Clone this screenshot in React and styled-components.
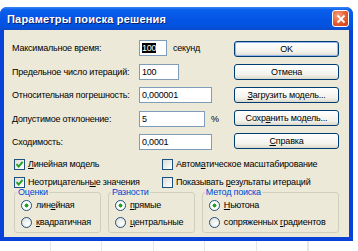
import React from "react";
import styled, { createGlobalStyle } from "styled-components";

const GlobalStyle = createGlobalStyle`
	html, body {
		margin: 0;
		padding: 0;
		background: #ffffff;
	}
	body {
		font-family: "Liberation Sans", Arial, sans-serif;
		font-size: 9px;
		letter-spacing: -0.2px;
		color: #000;
	}
`;

const U = styled.span`
	text-decoration: underline;
`;

const u = (text, i) => (
	<span>
		{text.slice(0, i)}
		<U>{text[i]}</U>
		{text.slice(i + 1)}
	</span>
);

const Check = ({ checked }) => (
	<CheckBox>
		{checked && (
			<svg width="9" height="9" viewBox="0 0 9 9">
				<path d="M1.5 4.2 L3.6 6.5 L7.6 1.8" fill="none" stroke="#21a121" strokeWidth="1.9" />
			</svg>
		)}
	</CheckBox>
);

const App = () => {
	const fields = [
		{ label: "Максимальное время:", value: "100", width: 28, unit: "секунд", selected: true },
		{ label: "Предельное число итераций:", value: "100", width: 40 },
		{ label: "Относительная погрешность:", value: "0,000001", width: 73 },
		{ label: "Допустимое отклонение:", value: "5", width: 66, unit: "%" },
		{ label: "Сходимость:", value: "0,0001", width: 73 },
	];

	const buttons = [
		{ text: "OK", focused: true },
		{ text: "Отмена" },
		{ text: u("Загрузить модель...", 0) },
		{ text: u("Сохранить модель...", 4) },
		{ text: u("Справка", 0) },
	];

	const groups = [
		{ title: "Оценки", width: 88, items: [u("линейная", 3), u("квадратичная", 0)] },
		{ title: "Разности", width: 88, items: [u("прямые", 0), u("центральные", 0)] },
		{ title: "Метод поиска", width: 139, items: [u("Ньютона", 0), u("сопряженных градиентов", 12)] },
	];

	return (
		<>
			<GlobalStyle />
			<Window>
				<TitleBar>
					<Title>Параметры поиска решения</Title>
					<CloseButton>
						<svg width="10" height="10" viewBox="0 0 10 10">
							<path d="M1.5 1.5 L8.5 8.5 M8.5 1.5 L1.5 8.5" stroke="#fff" strokeWidth="1.8" />
						</svg>
					</CloseButton>
				</TitleBar>
				<Body>
					<Top>
						<Form>
							{fields.map((f, i) => (
								<Row key={i}>
									<Label>{f.label}</Label>
									<Input style={{ width: f.width }}>
										{f.selected ? <Selected>{f.value}</Selected> : f.value}
									</Input>
									{f.unit && <Unit>{f.unit}</Unit>}
								</Row>
							))}
						</Form>
						<Buttons>
							{buttons.map((b, i) => (
								<Button key={i} $focused={b.focused}>{b.text}</Button>
							))}
						</Buttons>
					</Top>
					<Checks>
						<CheckRow><Check checked />{u("Линейная модель", 0)}</CheckRow>
						<CheckRow><Check />{u("Автоматическое масштабирование", 5)}</CheckRow>
						<CheckRow><Check checked />{u("Неотрицательные значения", 13)}</CheckRow>
						<CheckRow><Check />{u("Показывать результаты итераций", 11)}</CheckRow>
					</Checks>
					<Groups>
						{groups.map((g, i) => (
							<Group key={i} style={{ width: g.width }}>
								<Legend>{g.title}</Legend>
								{g.items.map((item, k) => (
									<RadioRow key={k}>
										<Radio $on={k === 0} />
										{item}
									</RadioRow>
								))}
							</Group>
						))}
					</Groups>
				</Body>
			</Window>
			<Sheet />
		</>
	);
};

export default App;

const Window = styled.div`
	margin-top: 7px;
	width: 353px;
	box-sizing: border-box;
	background: #0842d8;
	border-radius: 7px 7px 0 0;
	padding: 0 4px 4px 4px;
`;

const TitleBar = styled.div`
	height: 23px;
	display: flex;
	align-items: center;
	justify-content: space-between;
	margin: 0 -4px;
	padding: 0 4px 0 7px;
	border-radius: 7px 7px 0 0;
	background: linear-gradient(#3b8af8 0%, #0a5fec 12%, #0555e6 50%, #0352df 85%, #0c4bc8 100%);
`;

const Title = styled.div`
	color: #fff;
	font-weight: bold;
	font-size: 11px;
	text-shadow: 1px 1px #0a1f6c;
	letter-spacing: 0.2px;
`;

const CloseButton = styled.div`
	width: 15px;
	height: 15px;
	display: flex;
	align-items: center;
	justify-content: center;
	border: 1px solid #fff;
	border-radius: 3px;
	background: radial-gradient(circle at 35% 30%, #f6a07e, #e4562c 60%, #c73c1a);
`;

const Body = styled.div`
	background: #ece9d8;
	padding: 10px 10px 4px 8px;
`;

const Top = styled.div`
	display: flex;
	justify-content: space-between;
`;

const Form = styled.div`
	display: flex;
	flex-direction: column;
	gap: 7.5px;
`;

const Row = styled.div`
	display: flex;
	align-items: center;
	height: 16px;
	white-space: nowrap;
`;

const Label = styled.div`
	width: 127px;
	flex-shrink: 0;
`;

const Input = styled.div`
	height: 16px;
	box-sizing: border-box;
	border: 1px solid #7f9db9;
	background: #fff;
	display: flex;
	align-items: center;
	padding-left: 2px;
`;

const Selected = styled.span`
	background: #000;
	color: #fff;
`;

const Unit = styled.div`
	margin-left: 6px;
`;

const Buttons = styled.div`
	display: flex;
	flex-direction: column;
	gap: 7px;
	padding-top: 1px;
`;

const Button = styled.div`
	width: 105px;
	height: 16px;
	box-sizing: border-box;
	border: 1px solid #003c74;
	border-radius: 3px;
	background: linear-gradient(#ffffff, #f3f2ec 70%, #dcd9cb);
	display: flex;
	align-items: center;
	justify-content: center;
	box-shadow: ${(p) => (p.$focused ? "inset 0 0 0 1px #98b8f0" : "none")};
`;

const Checks = styled.div`
	display: grid;
	grid-template-columns: 148px 1fr;
	row-gap: 6px;
	margin-top: 8px;
	padding-left: 2px;
`;

const CheckRow = styled.div`
	display: flex;
	align-items: center;
	height: 12px;
	white-space: nowrap;
`;

const CheckBox = styled.div`
	width: 11px;
	height: 11px;
	box-sizing: border-box;
	border: 1px solid #1c5180;
	background: linear-gradient(135deg, #dcdcd7, #fff);
	margin-right: 3px;
	display: flex;
	align-items: center;
	justify-content: center;
`;

const Groups = styled.div`
	display: flex;
	gap: 7px;
	margin-top: -1px;
	padding-left: 2px;
`;

const Group = styled.fieldset`
	margin: 0;
	min-width: 0;
	box-sizing: border-box;
	border: 1px solid #d0d0bf;
	border-radius: 3px;
	padding: 2px 0 4px 6px;
	display: flex;
	flex-direction: column;
	gap: 5px;
`;

const Legend = styled.legend`
	color: #0046d5;
	padding: 0 1px;
	margin-left: -4px;
`;

const RadioRow = styled.div`
	display: flex;
	align-items: center;
	height: 12px;
	white-space: nowrap;
`;

const Radio = styled.div`
	width: 11px;
	height: 11px;
	box-sizing: border-box;
	border-radius: 50%;
	border: 1px solid #1c5180;
	background: ${(p) =>
		p.$on
			? "radial-gradient(circle, #21a121 0 1.8px, #fff 2.2px)"
			: "radial-gradient(circle at 65% 65%, #fff, #dcdcd7)"};
	margin-right: 4px;
`;

const Sheet = styled.div`
	height: 12px;
	background: repeating-linear-gradient(
		90deg,
		transparent 0 50px,
		#e6e6e6 50px 51px,
		transparent 51px 51.5px
	);
`;
